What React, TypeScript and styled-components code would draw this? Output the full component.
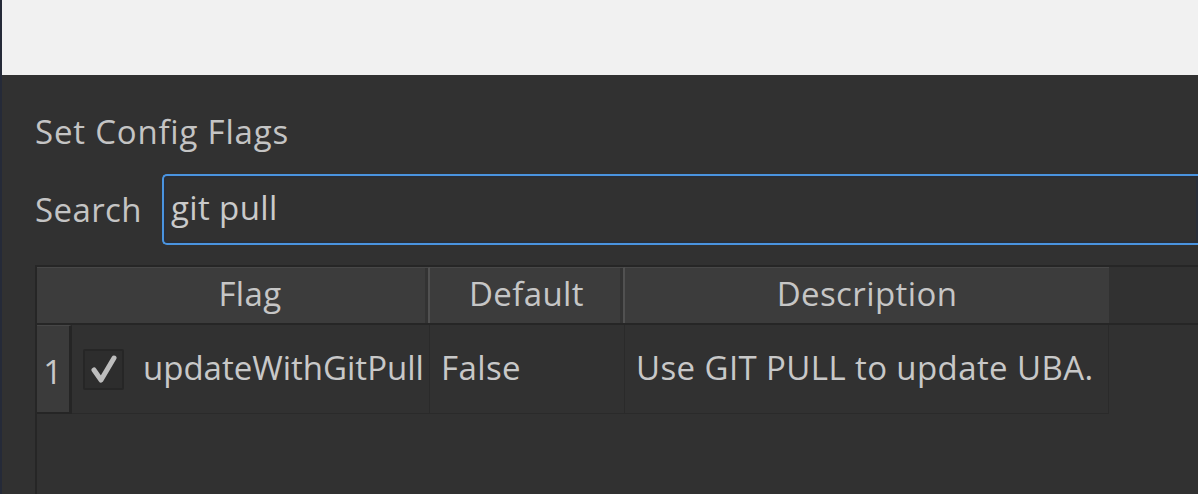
import React from 'react';
import styled, { createGlobalStyle } from 'styled-components';

const GlobalStyle = createGlobalStyle`
  html, body {
    margin: 0;
    padding: 0;
    background: #313131;
  }
  body {
    font-family: 'Open Sans', 'Noto Sans', sans-serif;
    color: #c4c4c4;
    letter-spacing: 0.4px;
  }
`;

const Screen = styled.div`
  width: 1198px;
  height: 494px;
  overflow: hidden;
  display: flex;
  flex-direction: column;
  border-left: 2px solid #252a38;
  box-sizing: border-box;
`;

const TopStrip = styled.div`
  height: 75px;
  flex-shrink: 0;
  background: #f1f1f1;
`;

const Panel = styled.div`
  flex: 1;
  background: #313131;
  padding: 38px 0 0 33px;
  display: flex;
  flex-direction: column;
`;

const Title = styled.div`
  font-size: 33px;
  line-height: 38px;
  letter-spacing: 0.8px;
`;

const SearchRow = styled.div`
  margin-top: 23px;
  display: flex;
  align-items: center;
  gap: 20px;
`;

const Label = styled.div`
  font-size: 33px;
  line-height: 38px;
`;

const SearchBox = styled.div`
  flex: 1;
  height: 71px;
  box-sizing: border-box;
  border: 2px solid #4a94e0;
  border-right: none;
  border-radius: 5px 0 0 5px;
  box-shadow: inset 0 0 0 2px #2a2f38;
  display: flex;
  align-items: center;
  padding: 0 0 4px 7px;
  font-size: 33px;
  color: #cacaca;
`;

const Table = styled.div`
  margin-top: 20px;
  flex: 1;
  border-top: 2px solid #262626;
  border-left: 2px solid #262626;
  display: flex;
  flex-direction: column;
`;

const Cols = '35px 358px 195px 484px';

const HeaderRow = styled.div`
  display: grid;
  grid-template-columns: ${Cols};
  height: 58px;
  box-sizing: border-box;
  border-bottom: 2px solid #262626;
`;

const HeadCell = styled.div<{ $sep?: boolean }>`
  background: #3c3c3c;
  border-top: 1px solid #484848;
  box-sizing: border-box;
  display: flex;
  align-items: center;
  justify-content: center;
  font-size: 33px;
  color: #c6c6c6;
  padding-bottom: 4px;
  border-right: ${p => (p.$sep ? '2px solid #515151' : 'none')};
  box-shadow: ${p => (p.$sep ? 'inset -3px 0 0 #333' : 'none')};
`;

const BodyRow = styled.div`
  display: grid;
  grid-template-columns: ${Cols};
  height: 89px;
`;

const RowNum = styled.div`
  background: #3b3b3b;
  border-top: 1px solid #474747;
  border-right: 3px solid #252525;
  border-bottom: 2px solid #252525;
  box-sizing: border-box;
  display: flex;
  align-items: center;
  justify-content: center;
  font-size: 33px;
  padding: 4px 0 0 0;
  color: #c8c8c8;
`;

const Cell = styled.div<{ $tight?: boolean }>`
  box-sizing: border-box;
  border-right: 1px solid #2a2a2a;
  border-bottom: 1px solid #2a2a2a;
  display: flex;
  align-items: center;
  gap: 19px;
  padding: 0 0 4px 11px;
  font-size: 33px;
  white-space: nowrap;
  color: #c8c8c8;
  letter-spacing: ${p => (p.$tight ? '0' : '0.4px')};
`;

const Check = styled.div`
  width: 41px;
  height: 41px;
  box-sizing: border-box;
  background: #2d2d2d;
  border: 2px solid #262626;
  border-radius: 2px;
  display: flex;
  align-items: center;
  justify-content: center;
  flex-shrink: 0;
  margin-top: 4px;
`;

export default function App() {
  return (
    <>
      <GlobalStyle />
      <Screen>
        <TopStrip />
        <Panel>
          <Title>Set Config Flags</Title>
          <SearchRow>
            <Label>Search</Label>
            <SearchBox>git pull</SearchBox>
          </SearchRow>
          <Table>
            <HeaderRow>
              <HeadCell />
              <HeadCell $sep>Flag</HeadCell>
              <HeadCell $sep>Default</HeadCell>
              <HeadCell>Description</HeadCell>
            </HeaderRow>
            <BodyRow>
              <RowNum>1</RowNum>
              <Cell $tight>
                <Check>
                  <svg width="28" height="30" viewBox="0 0 28 30">
                    <path d="M4 16 L11 26 L24 4" fill="none" stroke="#bdbdbd" strokeWidth="5" strokeLinejoin="round" strokeLinecap="round" />
                  </svg>
                </Check>
                updateWithGitPull
              </Cell>
              <Cell>False</Cell>
              <Cell>Use GIT PULL to update UBA.</Cell>
            </BodyRow>
          </Table>
        </Panel>
      </Screen>
    </>
  );
}
